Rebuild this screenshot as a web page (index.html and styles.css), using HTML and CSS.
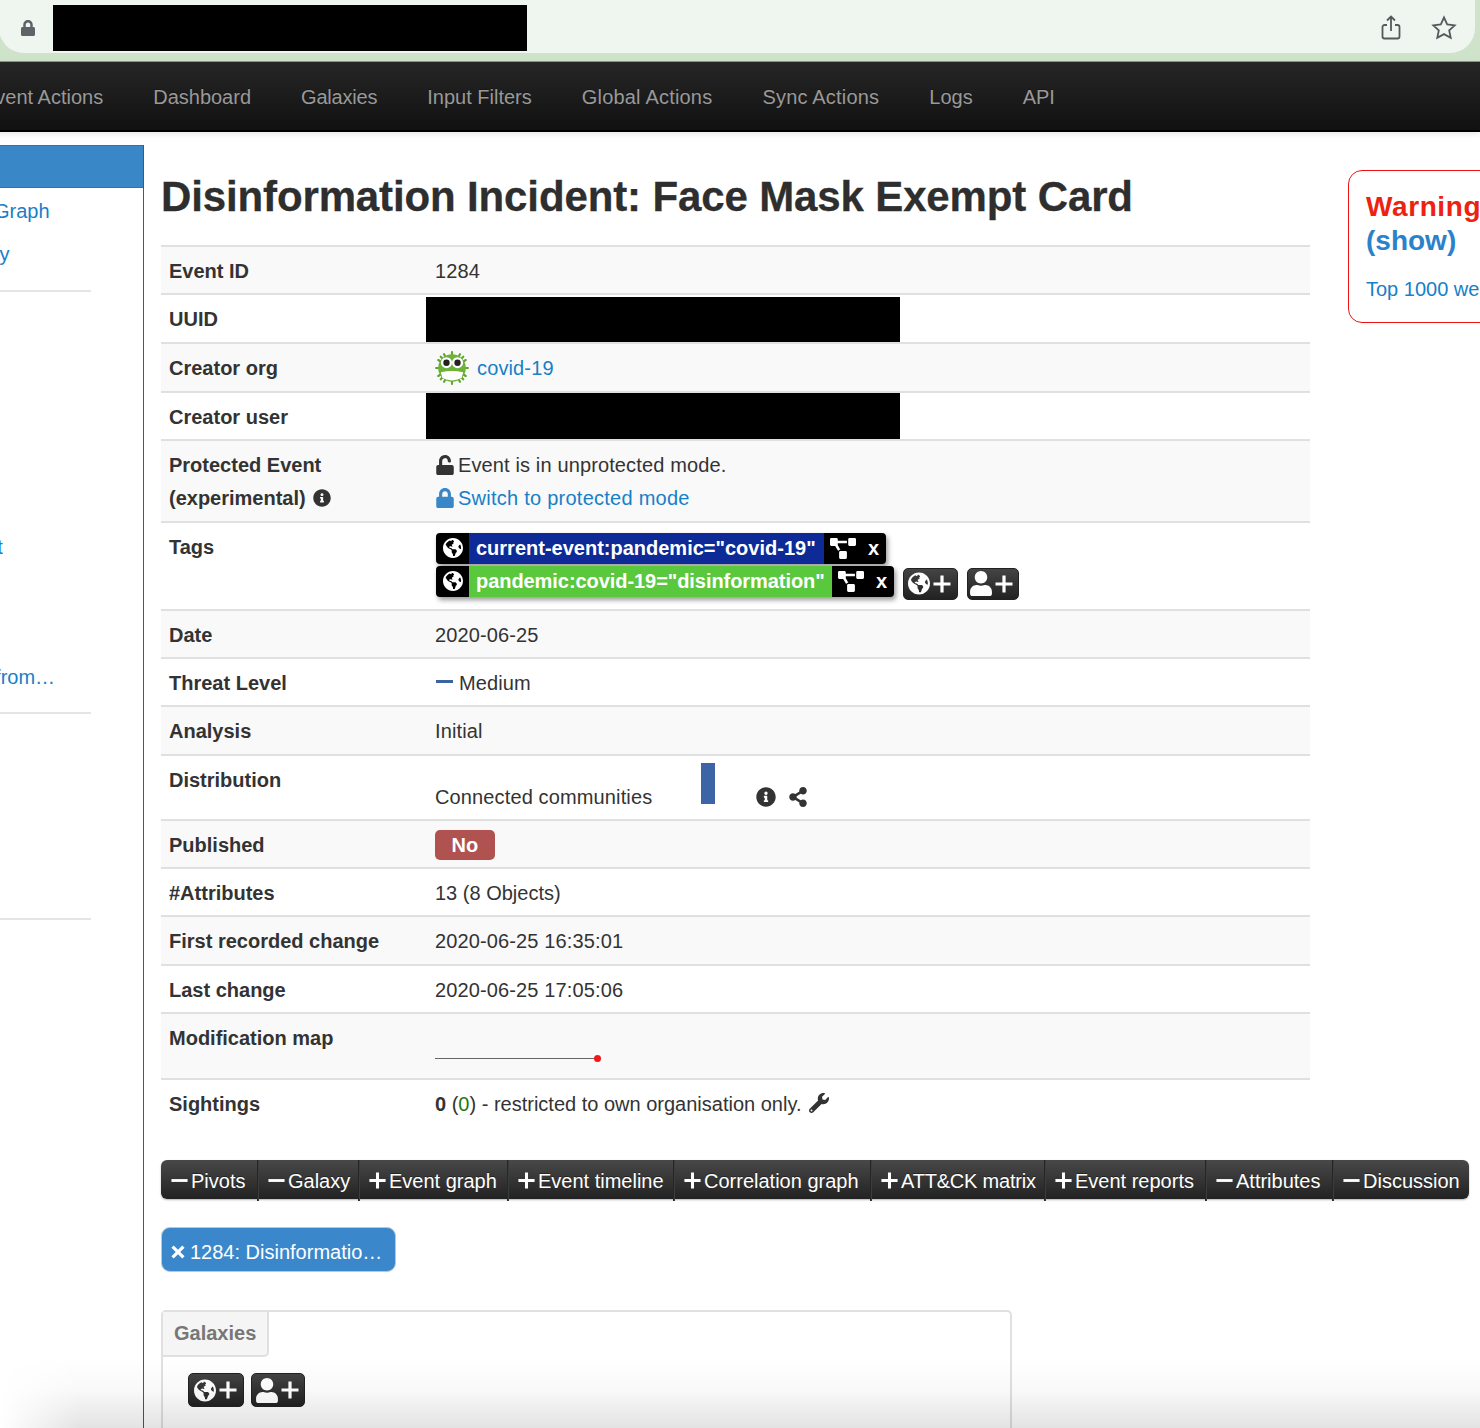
FILE: index.html
```html
<!DOCTYPE html>
<html lang="en">
<head>
  <meta charset="utf-8">
  <meta name="viewport" content="width=device-width,initial-scale=1">

  <title>Disinformation Incident: Face Mask Exempt Card</title>

  <link rel="stylesheet" href="styles.css">
</head>
<body>
  <svg class="sprite" xmlns="http://www.w3.org/2000/svg">
    <symbol id="i-lock" viewBox="0 0 448 512"><path d="M400 224h-24v-72C376 68.2 307.8 0 224 0S72 68.2 72 152v72H48c-26.5 0-48 21.5-48 48v192c0 26.5 21.5 48 48 48h352c26.5 0 48-21.5 48-48V272c0-26.5-21.5-48-48-48zm-104 0H152v-72c0-39.7 32.3-72 72-72s72 32.3 72 72v72z"/></symbol>
    <symbol id="i-unlock" viewBox="0 0 448 512"><path d="M400 256H152V152.900c0-39.600 31.700-72.500 71.300-72.900 40-.4 72.700 32.100 72.700 72v16c0 13.300 10.700 24 24 24h32c13.300 0 24-10.700 24-24v-16C376 68 307.500-.3 223.500 0 139.500.3 72 69.500 72 153.500V256H48c-26.500 0-48 21.500-48 48v160c0 26.500 21.500 48 48 48h352c26.500 0 48-21.500 48-48V304c0-26.500-21.500-48-48-48z"/></symbol>
    <symbol id="i-info" viewBox="0 0 512 512"><path d="M256 8C119.043 8 8 119.083 8 256c0 136.997 111.043 248 248 248s248-111.003 248-248C504 119.083 392.957 8 256 8zm0 110c23.196 0 42 18.804 42 42s-18.804 42-42 42-42-18.804-42-42 18.804-42 42-42zm56 254c0 6.627-5.373 12-12 12h-88c-6.627 0-12-5.373-12-12v-24c0-6.627 5.373-12 12-12h12v-64h-12c-6.627 0-12-5.373-12-12v-24c0-6.627 5.373-12 12-12h64c6.627 0 12 5.373 12 12v100h12c6.627 0 12 5.373 12 12v24z"/></symbol>
    <symbol id="i-share" viewBox="0 0 448 512"><path d="M352 320c-22.608 0-43.387 7.819-59.79 20.895l-102.486-64.054a96.551 96.551 0 0 0 0-41.683l102.486-64.054C308.613 184.181 329.392 192 352 192c53.019 0 96-42.981 96-96S405.019 0 352 0s-96 42.981-96 96c0 7.158.79 14.13 2.276 20.841L155.79 180.895C139.387 167.819 118.608 160 96 160c-53.019 0-96 42.981-96 96s42.981 96 96 96c22.608 0 43.387-7.819 59.79-20.895l102.486 64.054A96.301 96.301 0 0 0 256 416c0 53.019 42.981 96 96 96s96-42.981 96-96-42.981-96-96-96z"/></symbol>
    <symbol id="i-wrench" viewBox="0 0 512 512"><path d="M507.73 109.1c-2.24-9.03-13.54-12.09-20.12-5.51l-74.36 74.36-67.88-11.31-11.31-67.88 74.36-74.36c6.62-6.62 3.43-17.9-5.66-20.16-47.38-11.74-99.55.91-136.58 37.93-39.64 39.64-50.55 97.1-34.05 147.2L18.74 402.76c-24.99 24.99-24.99 65.51 0 90.5 24.99 24.99 65.51 24.99 90.5 0l213.21-213.21c50.12 16.71 107.47 5.68 147.37-34.22 37.07-37.07 49.7-89.32 37.91-136.73zM64 472c-13.25 0-24-10.75-24-24 0-13.26 10.75-24 24-24s24 10.74 24 24c0 13.25-10.75 24-24 24z"/></symbol>
    <symbol id="i-globe" viewBox="0 0 496 512"><path d="M248 8C111.03 8 0 119.03 0 256s111.03 248 248 248 248-111.03 248-248S384.97 8 248 8zm82.29 357.6c-3.9 3.88-7.99 7.95-11.31 11.28-2.99 3-5.1 6.7-6.17 10.71-1.51 5.66-2.73 11.38-4.77 16.87l-17.39 46.85c-13.76 3-28 4.69-42.65 4.69v-27.38c1.69-12.62-7.64-36.26-22.63-51.25-6-6-9.37-14.14-9.37-22.63v-32.01c0-11.64-6.27-22.34-16.46-27.97-14.37-7.95-34.81-19.06-48.81-26.11-11.48-5.78-22.1-13.14-31.65-21.75l-.8-.72a114.792 114.792 0 0 1-18.06-20.74c-9.38-13.77-24.66-36.42-34.59-51.14 20.47-45.5 57.36-82.04 103.2-101.89l24.01 12.01C203.48 89.74 216 82.01 216 70.11v-11.3c7.99-1.29 16.12-2.11 24.39-2.42l28.3 28.3c6.25 6.25 6.25 16.38 0 22.63L264 112l-10.34 10.34c-3.12 3.12-3.12 8.19 0 11.31l4.69 4.69c3.12 3.12 3.12 8.19 0 11.31l-8 8a8.008 8.008 0 0 1-5.66 2.34h-8.99c-2.08 0-4.08.81-5.58 2.27l-9.92 9.65a8.008 8.008 0 0 0-1.58 9.31l15.59 31.19c2.66 5.32-1.21 11.58-7.15 11.58h-5.64c-1.93 0-3.79-.7-5.24-1.96l-9.28-8.06a16.017 16.017 0 0 0-15.55-3.1l-31.17 10.39a11.95 11.95 0 0 0-8.17 11.34c0 4.53 2.56 8.66 6.61 10.69l11.08 5.54c9.41 4.71 19.79 7.16 30.31 7.16s22.59 27.29 32 32h66.75c8.49 0 16.62 3.37 22.63 9.37l13.69 13.69a30.503 30.503 0 0 1 8.93 21.57 46.536 46.536 0 0 1-13.72 32.98zM417 274.25c-5.79-1.45-10.84-5-14.15-9.97l-17.98-26.97a23.97 23.97 0 0 1 0-26.62l19.59-29.38c2.32-3.47 5.5-6.29 9.24-8.15l12.98-6.49C440.2 193.59 448 223.87 448 256c0 8.67-.74 17.16-1.82 25.54L417 274.25z"/></symbol>
    <symbol id="i-user" viewBox="0 0 448 512"><path d="M224 256c70.7 0 128-57.3 128-128S294.7 0 224 0 96 57.3 96 128s57.3 128 128 128zm89.6 32h-16.7c-22.2 10.2-46.9 16-72.9 16s-50.6-5.8-72.9-16h-16.7C60.2 288 0 348.2 0 422.4V464c0 26.5 21.5 48 48 48h352c26.5 0 48-21.5 48-48v-41.6c0-74.2-60.2-134.4-134.4-134.4z"/></symbol>
    <symbol id="i-graph" viewBox="0 0 640 512"><path d="M384 320H256c-17.67 0-32 14.33-32 32v128c0 17.67 14.33 32 32 32h128c17.67 0 32-14.33 32-32V352c0-17.67-14.33-32-32-32zM192 32c0-17.67-14.33-32-32-32H32C14.33 0 0 14.33 0 32v128c0 17.67 14.33 32 32 32h95.72l73.16 128.04C211.98 300.98 232.4 288 256 288h.28L192 175.51V128h224V64H192V32zM608 0H480c-17.67 0-32 14.33-32 32v128c0 17.67 14.33 32 32 32h128c17.67 0 32-14.33 32-32V32c0-17.67-14.33-32-32-32z"/></symbol>
    <symbol id="i-plus" viewBox="0 0 20 20"><path d="M8.4 1.5h3.2v6.9h6.9v3.2h-6.9v6.9H8.4v-6.9H1.5V8.4h6.9z"/></symbol>
    <symbol id="i-minus" viewBox="0 0 20 20"><path d="M1.5 8.5h17v3h-17z"/></symbol>
    <symbol id="i-close" viewBox="0 0 20 20"><path d="M4.6 1.8 10 7.2l5.4-5.4 2.8 2.8-5.4 5.4 5.4 5.4-2.8 2.8-5.4-5.4-5.4 5.4-2.8-2.8L7.2 10 1.800 4.600z"/></symbol>
  </svg>

  <div class="page">
    <div class="browser">
      <div class="address">
        <svg class="address-lock"><use href="#i-lock"/></svg>
        <div class="redacted-url"></div>
        <div class="address-actions">
          <svg class="address-icon" width="24" height="26" viewBox="0 0 24 26">
            <path d="M8 10H5.500a2 2 0 0 0-2 2v9.500a2 2 0 0 0 2 2h13a2 2 0 0 0 2-2V12a2 2 0 0 0-2-2H16M12 16V2M8 5.500 12 1.500l4 4"/>
          </svg>
          <svg class="address-icon" width="26" height="26" viewBox="0 0 26 26">
            <path d="m13 2.500 3.200 6.900 7.500.9-5.500 5.100 1.500 7.400-6.700-3.700-6.700 3.700 1.500-7.400-5.500-5.100 7.500-.9z"/>
          </svg>
        </div>
      </div>
    </div>

    <nav class="navbar">
      <a>Event Actions</a>
      <a>Dashboard</a>
      <a class="nav-tight">Galaxies</a>
      <a>Input Filters</a>
      <a class="nav-wide">Global Actions</a>
      <a class="nav-wide">Sync Actions</a>
      <a>Logs</a>
      <a>API</a>
    </nav>

    <div class="layout">
      <aside class="sidebar">
        <div class="side-active"></div>
        <a class="side-link">View Correlation Graph</a>
        <a class="side-link">View Event History</a>
        <hr class="side-divider">
        <div class="side-gap-a"></div>
        <a class="side-link side-link-tail">Add Event Report</a>
        <div class="side-gap-b"></div>
        <a class="side-link side-link-tail">Merge attributes from…</a>
        <hr class="side-divider side-divider-b">
        <div class="side-gap-c"></div>
        <hr class="side-divider">
      </aside>

      <main class="content">
        <div class="top">
          <div class="event">
            <h2 class="title">Disinformation Incident: Face Mask Exempt Card</h2>

            <table class="meta">
              <tr>
                <th>Event ID</th>
                <td>1284</td>
              </tr>
              <tr>
                <th>UUID</th>
                <td class="cell-redacted"><div class="redacted"></div></td>
              </tr>
              <tr>
                <th>Creator org</th>
                <td class="cell-org">
                  <div class="org">
                    <svg class="org-logo" viewBox="1 1 32 32">
                      <g stroke="#5da52d" stroke-width="2" stroke-linecap="round">
                        <path d="M17 2v30M2 17h30M6.400 6.400l21.200 21.200M27.600 6.400 6.400 27.600M9.500 4 24.500 30M24.500 4 9.500 30M4 9.500l26 15M30 9.500l-26 15"/>
                      </g>
                      <circle cx="17" cy="17" r="13" fill="#6eb23a"/>
                      <path d="M6.500 21q10.500-2.500 21 0l-1.500 5.500q-9 4.500-18 0z" fill="#fff"/>
                      <circle cx="11.800" cy="12" r="5.200" fill="#fff"/>
                      <circle cx="22.200" cy="12" r="5.200" fill="#fff"/>
                      <circle cx="11.800" cy="12" r="3" fill="#222"/>
                      <circle cx="22.200" cy="12" r="3" fill="#222"/>
                    </svg>
                    <a class="link">covid-19</a>
                  </div>
                </td>
              </tr>
              <tr>
                <th>Creator user</th>
                <td class="cell-redacted cell-redacted-tight"><div class="redacted"></div></td>
              </tr>
              <tr>
                <th>Protected Event<br>(experimental) <svg class="info-inline"><use href="#i-info"/></svg></th>
                <td class="cell-protected">
                  <svg class="unlock"><use href="#i-unlock"/></svg>Event is in unprotected mode.<br>
                  <a class="link link-wide"><svg class="lock"><use href="#i-lock"/></svg>Switch to protected mode</a>
                </td>
              </tr>
              <tr>
                <th>Tags</th>
                <td class="cell-tags">
                  <div class="tag-row">
                    <div class="tag">
                      <span class="tag-globe"><svg><use href="#i-globe"/></svg></span>
                      <span class="tag-name tag-blue">current-event:pandemic="covid-19"</span>
                      <span class="tag-tool"><svg><use href="#i-graph"/></svg></span>
                      <span class="tag-x">x</span>
                    </div>
                  </div>
                  <div class="tag-row">
                    <div class="tag">
                      <span class="tag-globe"><svg><use href="#i-globe"/></svg></span>
                      <span class="tag-name tag-green">pandemic:covid-19="disinformation"</span>
                      <span class="tag-tool"><svg><use href="#i-graph"/></svg></span>
                      <span class="tag-x">x</span>
                    </div>
                    <button class="add-btn"><svg class="add-globe"><use href="#i-globe"/></svg><svg class="add-plus"><use href="#i-plus"/></svg></button>
                    <button class="add-btn add-user"><svg class="add-globe"><use href="#i-user"/></svg><svg class="add-plus"><use href="#i-plus"/></svg></button>
                  </div>
                </td>
              </tr>
              <tr>
                <th>Date</th>
                <td>2020-06-25</td>
              </tr>
              <tr>
                <th>Threat Level</th>
                <td><span class="threat"></span>Medium</td>
              </tr>
              <tr>
                <th>Analysis</th>
                <td>Initial</td>
              </tr>
              <tr>
                <th>Distribution</th>
                <td class="cell-dist">
                  <div class="dist">
                    <span class="dist-name">Connected communities</span>
                    <span class="dist-bar"></span>
                    <svg class="dist-info"><use href="#i-info"/></svg>
                    <svg class="dist-share"><use href="#i-share"/></svg>
                  </div>
                </td>
              </tr>
              <tr>
                <th>Published</th>
                <td class="cell-published"><span class="badge-no">No</span></td>
              </tr>
              <tr>
                <th>#Attributes</th>
                <td class="cell-plain">13 (8 Objects)</td>
              </tr>
              <tr>
                <th>First recorded change</th>
                <td>2020-06-25 16:35:01</td>
              </tr>
              <tr>
                <th>Last change</th>
                <td>2020-06-25 17:05:06</td>
              </tr>
              <tr>
                <th>Modification map</th>
                <td class="cell-map">
                  <div class="sparkline"><span class="sparkline-dot"></span></div>
                </td>
              </tr>
              <tr>
                <th>Sightings</th>
                <td class="cell-plain"><b>0</b> (<span class="green">0</span>) - restricted to own organisation only. <svg class="wrench"><use href="#i-wrench"/></svg></td>
              </tr>
            </table>
          </div>

          <div class="warning">
            <div class="warning-title">Warning</div>
            <a class="warning-show">(show)</a>
            <a class="warning-link">Top 1000 website</a>
          </div>
        </div>

        <div class="toolbar">
          <a class="tool"><svg><use href="#i-minus"/></svg>Pivots</a>
          <a class="tool"><svg><use href="#i-minus"/></svg>Galaxy</a>
          <a class="tool"><svg><use href="#i-plus"/></svg>Event graph</a>
          <a class="tool"><svg><use href="#i-plus"/></svg>Event timeline</a>
          <a class="tool"><svg><use href="#i-plus"/></svg>Correlation graph</a>
          <a class="tool tool-tight"><svg><use href="#i-plus"/></svg>ATT&amp;CK matrix</a>
          <a class="tool"><svg><use href="#i-plus"/></svg>Event reports</a>
          <a class="tool"><svg><use href="#i-minus"/></svg>Attributes</a>
          <a class="tool"><svg><use href="#i-minus"/></svg>Discussion</a>
        </div>

        <div class="pin">
          <svg><use href="#i-close"/></svg>1284: Disinformatio…
        </div>

        <section class="box">
          <div class="box-tab">Galaxies</div>
          <div class="box-actions">
            <button class="add-btn add-small"><svg class="add-globe"><use href="#i-globe"/></svg><svg class="add-plus"><use href="#i-plus"/></svg></button>
            <button class="add-btn add-small"><svg class="add-globe"><use href="#i-user"/></svg><svg class="add-plus"><use href="#i-plus"/></svg></button>
          </div>
        </section>
      </main>
    </div>

    <div class="window-shadow"></div>
  </div>
</body>
</html>
```

FILE: styles.css
```css
*, :after, :before {
  box-sizing: border-box;
}

html, body {
  margin: 0;
  padding: 0;
}

body {
  background-color: #fff;
  color: #333;
  font-family: "Liberation Sans", Arial, sans-serif;
  font-size: 20px;
  line-height: 24px;
}

svg {
  fill: currentColor;
}

.sprite {
  display: none;
}

.page {
  position: relative;
  display: flex;
  flex-direction: column;
  width: 1480px;
  height: 1428px;
  overflow: hidden;
}

/* browser chrome */
.browser {
  flex: none;
  height: 62px;
  padding-right: 5px;
  background-color: #cfe3cb;
  border-bottom: 1px solid #8a9a88;
}

.address {
  display: flex;
  align-items: center;
  height: 53px;
  margin-left: -1px;
  padding: 2px 18px 0 22px;
  background-color: #eff6f0;
  border-radius: 0 0 25px 25px;
}

.address-lock {
  width: 14px;
  height: 18px;
  color: #5f6368;
}

.redacted-url {
  width: 474px;
  height: 46px;
  margin-left: 18px;
  background-color: #000;
}

.address-actions {
  display: flex;
  align-items: center;
  gap: 28px;
  margin-left: auto;
}

.address-icon {
  fill: none;
  stroke: #55595c;
  stroke-width: 1.800;
}

/* top nav */
.navbar {
  flex: none;
  display: flex;
  gap: 50px;
  align-items: center;
  height: 70px;
  padding-top: 2px;
  margin-left: -18px;
  width: 1498px;
  background-image: linear-gradient(#262626, #111);
  border-bottom: 2px solid #000;
  box-shadow: 0 2px 6px rgba(0, 0, 0, .1);
  color: #999;
  text-shadow: 0 -1px 0 rgba(0, 0, 0, .25);
}

.nav-tight {
  letter-spacing: -.2px;
}

.nav-wide {
  letter-spacing: .2px;
}

.layout {
  flex: 1;
  display: flex;
  min-height: 0;
}

/* side menu, scrolled partly out of view */
.sidebar {
  flex: none;
  width: 144px;
  margin-top: 13px;
  border-right: 1px solid #555;
  overflow: hidden;
}

.side-active {
  height: 43px;
  margin-bottom: 2px;
  background-color: #3a87c8;
  border-top: 1px solid #1c78c0;
  border-bottom: 1px solid #1c78c0;
}

.side-link {
  display: block;
  margin-left: -158px;
  height: 43.330px;
  line-height: 43.330px;
  color: #1680c8;
  white-space: nowrap;
}

.side-link-tail {
  margin-left: -155px;
}

.side-divider {
  width: 91px;
  height: 2px;
  margin: 13px 0 0;
  border: 0;
  background-color: #e5e5e5;
}

.side-gap-a {
  height: 234px;
}

.side-gap-b {
  height: 86.660px;
}

.side-gap-c {
  height: 191px;
}

/* main column */
.content {
  flex: 1;
  min-width: 0;
  padding-left: 17px;
}

.top {
  display: flex;
  align-items: flex-start;
}

.event {
  flex: none;
  width: 1149px;
}

.title {
  margin: 40px 0 23px;
  color: #2e2e2e;
  font-size: 42px;
  line-height: 50px;
  font-weight: bold;
  letter-spacing: -.13px;
  -webkit-text-stroke: .3px #2e2e2e;
  white-space: nowrap;
}

.meta {
  width: 100%;
  border-collapse: separate;
  border-spacing: 0;
  table-layout: fixed;
}

.meta th, .meta td {
  height: 48.300px;
  padding: 12px 8px 10px 9px;
  border-top: 2px solid #e0e0e0;
  vertical-align: top;
  text-align: left;
  font-weight: normal;
}

.meta td {
  letter-spacing: .13px;
}

.meta .cell-plain {
  letter-spacing: 0;
}

.meta th {
  width: 265px;
  padding-left: 8px;
  font-weight: bold;
}

.meta tr:nth-child(odd) th, .meta tr:nth-child(odd) td {
  background-color: #f9f9f9;
}

.meta td b {
  font-weight: bold;
}

.link {
  color: #1680c8;
}

.link-wide {
  letter-spacing: .25px;
}

.meta .cell-redacted {
  padding: 2px 0 0;
}

.meta .cell-redacted-tight {
  padding: 0;
  height: 48px;
}

.redacted {
  width: 474px;
  height: 46px;
  margin-bottom: -1px;
  background-color: #000;
}

.cell-redacted-tight .redacted {
  margin-bottom: 0;
}

.meta .cell-org {
  padding-top: 7px;
  padding-bottom: 2px;
  height: 48px;
}

.org {
  display: flex;
  align-items: center;
  gap: 8px;
  height: 34px;
}

.org-logo {
  width: 34px;
  height: 34px;
}

.meta tr:nth-child(5) th, .meta .cell-protected {
  padding-top: 8px;
  padding-bottom: 6px;
  line-height: 33px;
}

.info-inline {
  width: 18px;
  height: 18px;
  margin-left: 2px;
  vertical-align: -2px;
}

.unlock {
  width: 18px;
  height: 20px;
  margin: 0 4px 0 1px;
  vertical-align: -3px;
}

.lock {
  width: 18px;
  height: 20px;
  margin: 0 4px 0 1px;
  vertical-align: -3px;
  color: #3a87c8;
}

/* tags */
.meta .cell-tags {
  padding: 10px 0 0 10px;
  height: 88px;
  letter-spacing: 0;
}

.tag-row {
  display: flex;
  gap: 9px;
  height: 33px;
  align-items: flex-start;
}

.tag {
  display: flex;
  align-items: stretch;
  height: 31px;
  background-color: #000;
  border-radius: 4px;
  box-shadow: 2px 3px 5px rgba(0, 0, 0, .4);
  color: #fff;
  font-weight: bold;
  line-height: 31px;
  white-space: nowrap;
}

.tag-globe {
  display: flex;
  align-items: center;
  width: 33px;
  padding-left: 7px;
}

.tag-globe svg {
  width: 20px;
  height: 22px;
}

.tag-name {
  padding: 0 8px 0 7px;
}

.tag-blue {
  background-color: #0d2a96;
}

.tag-green {
  padding-right: 7px;
  background-color: #5ac83c;
  letter-spacing: -.06px;
}

.tag-tool {
  display: flex;
  align-items: center;
  padding-left: 6px;
  width: 38px;
}

.tag-tool svg {
  width: 26px;
  height: 21px;
}

.tag-x {
  width: 24px;
  text-align: center;
}

.add-btn {
  display: flex;
  align-items: center;
  justify-content: center;
  gap: 1px;
  width: 55px;
  height: 32px;
  margin: 2px 0 0;
  padding: 0;
  background-image: linear-gradient(#444, #222);
  border: 1px solid #222;
  border-radius: 5px;
  color: #fff;
}

.add-user {
  width: 52px;
}

.add-globe {
  width: 22px;
  height: 25px;
}

.add-plus {
  width: 22px;
  height: 20px;
}

.threat {
  display: inline-block;
  width: 17px;
  height: 3px;
  margin: 0 6px 6px 1px;
  background-color: #3a63a0;
  vertical-align: middle;
}

.meta .cell-dist {
  padding-top: 7px;
  padding-bottom: 0;
  height: 65px;
}

.dist {
  display: flex;
  align-items: flex-end;
  height: 46px;
}

.dist-name {
  width: 266px;
}

.dist-bar {
  width: 14px;
  height: 41px;
  margin-bottom: 5px;
  background-color: #3d65a5;
}

.dist-info {
  width: 20px;
  height: 20px;
  margin: 0 0 2px 41px;
}

.dist-share {
  width: 18px;
  height: 20px;
  margin: 0 0 2px 13px;
}

.meta .cell-published {
  padding-top: 9px;
  padding-bottom: 4px;
}

.badge-no {
  display: block;
  width: 60px;
  height: 30px;
  background-color: #b0524f;
  border-radius: 5px;
  color: #fff;
  font-weight: bold;
  line-height: 30px;
  text-align: center;
}

.meta .cell-map {
  height: 66px;
}

.sparkline {
  position: relative;
  width: 162px;
  height: 1px;
  margin-top: 32px;
  background-color: #666;
}

.sparkline-dot {
  position: absolute;
  right: -4px;
  top: -3px;
  width: 7px;
  height: 7px;
  background-color: #f01818;
  border-radius: 50%;
}

.green {
  color: #1d7a12;
}

.wrench {
  width: 20px;
  height: 20px;
  margin-left: 2px;
  vertical-align: -2px;
}

/* warning card, runs past the window edge */
.warning {
  flex: none;
  width: 300px;
  height: 153px;
  margin: 38px 0 0 38px;
  padding: 19px 17px;
  border: 1px solid #ee1111;
  border-radius: 14px;
  white-space: nowrap;
}

.warning-title {
  color: #ee2211;
  font-size: 28px;
  font-weight: bold;
  line-height: 34px;
  letter-spacing: .6px;
}

.warning-show {
  display: block;
  color: #2b82c9;
  font-size: 28px;
  font-weight: bold;
  line-height: 34px;
}

.warning-link {
  display: block;
  margin-top: 19px;
  color: #1680c8;
}

/* collapsible section buttons */
.toolbar {
  display: grid;
  grid-template-columns: 96px 101px 149px 166px 197px 174px 161px 127px 137px;
  width: 1308px;
  height: 39px;
  margin-top: 34px;
  background-image: linear-gradient(#484848, #222);
  border-radius: 6px;
  box-shadow: 0 1px 2px rgba(0, 0, 0, .3);
  color: #fff;
  line-height: 40px;
  text-shadow: 0 -1px 0 rgba(0, 0, 0, .4);
}

.tool {
  display: flex;
  align-items: center;
  gap: 2px;
  padding: 1px 0 0 9px;
  border-left: 1px solid #262626;
  box-shadow: inset 1px 0 0 #3c3c3c;
  white-space: nowrap;
}

.tool:first-child {
  border-left: 0;
  box-shadow: none;
}

.tool svg {
  flex: none;
  width: 19px;
  height: 19px;
  margin-top: -1px;
}

.tool-tight {
  letter-spacing: -.2px;
}

.pin {
  display: flex;
  align-items: center;
  gap: 4px;
  width: 235px;
  height: 45px;
  margin-top: 28px;
  padding: 5px 0 0 8px;
  background-color: #3a88cb;
  border: 1px solid #b5c9da;
  border-radius: 9px;
  color: #fff;
  white-space: nowrap;
}

.pin svg {
  width: 16px;
  height: 16px;
}

.box {
  width: 851px;
  height: 200px;
  margin-top: 38px;
  border: 2px solid #e0e0e0;
  border-radius: 5px;
}

.box-tab {
  width: 106px;
  height: 45px;
  padding-left: 11px;
  background-color: #f5f5f5;
  border: solid #e0e0e0;
  border-width: 0 2px 2px 0;
  border-radius: 0 0 5px 0;
  color: #777;
  font-weight: bold;
  line-height: 43px;
}

.box-actions {
  display: flex;
  gap: 7px;
  padding: 16px 0 0 25px;
}

.add-small {
  width: 56px;
  height: 34px;
  margin: 0;
}

.add-small + .add-small {
  width: 54px;
}

/* soft shadow along the bottom of the captured window */
.window-shadow {
  position: absolute;
  left: 0;
  right: 0;
  bottom: 0;
  height: 70px;
  background-image: linear-gradient(rgba(0, 0, 0, 0), rgba(0, 0, 0, .025) 45%, rgba(0, 0, 0, .11));
  -webkit-mask-image: linear-gradient(90deg, transparent 0, #000 80px);
  mask-image: linear-gradient(90deg, transparent 0, #000 80px);
  pointer-events: none;
}
```
